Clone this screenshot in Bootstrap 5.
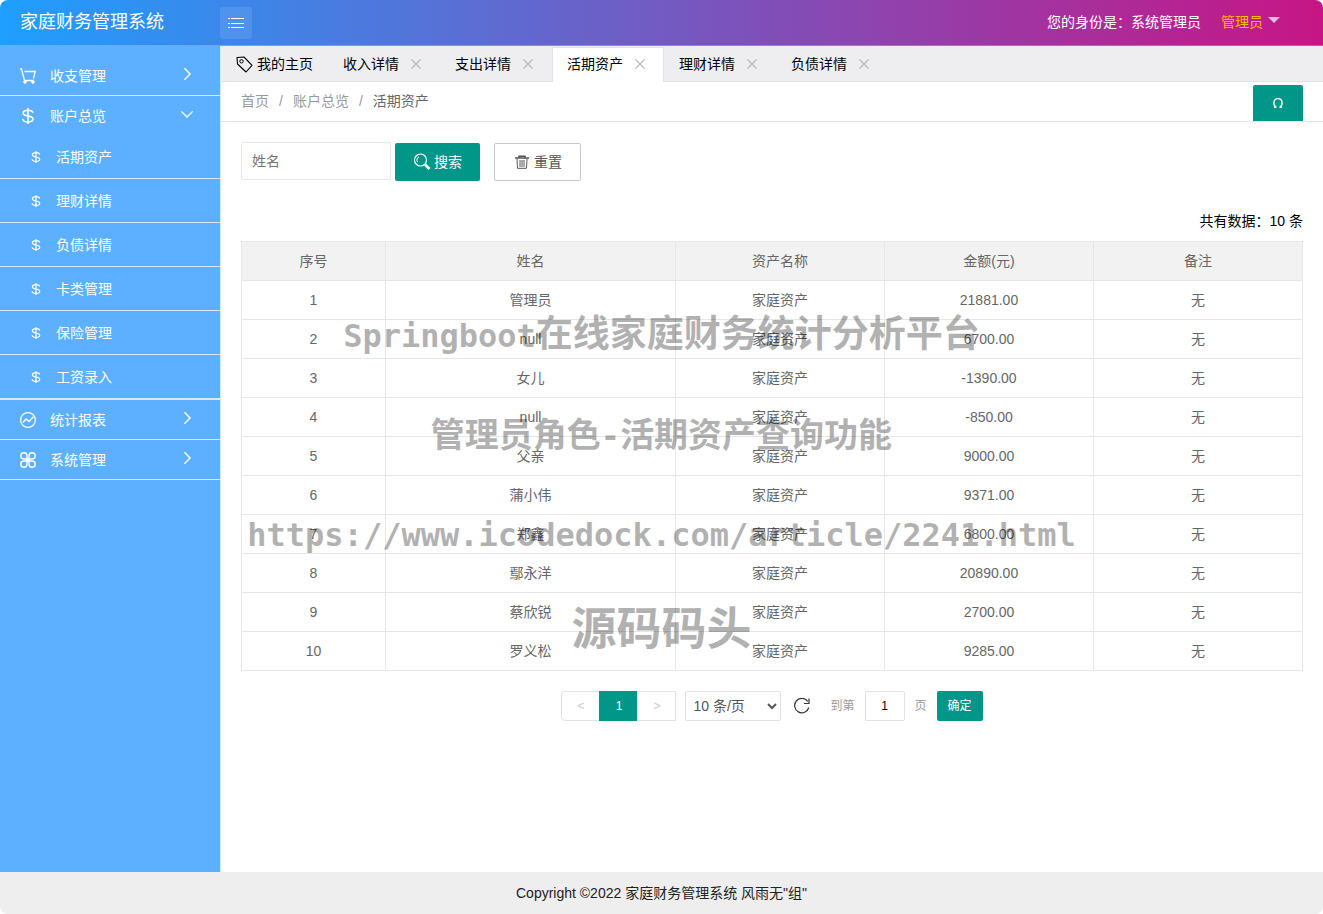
<!DOCTYPE html>
<html lang="zh-CN">
<head>
<meta charset="utf-8">
<meta name="viewport" content="width=device-width, initial-scale=1">
<title>家庭财务管理系统</title>
<link href="https://cdn.jsdelivr.net/npm/bootstrap@5.3.0/dist/css/bootstrap.min.css" rel="stylesheet">
<style>
  :root { --teal: #009688; --line: #e6e6e6; --side: #5dafff; }
  body { font-family: "Liberation Sans", "Noto Sans CJK SC", sans-serif; font-size: 14px; line-height: 24px; color: #000; background: #fff; }
  a { text-decoration: none; color: inherit; }
  svg { display: block; flex: none; fill: none; stroke: currentColor; }
  button, input, select { font-family: inherit; }
  .shell { border-radius: 8px; overflow: hidden; }
  .topbar { height: 46px; background: linear-gradient(to right, #1e9fff, #c71585); border-bottom: 1px solid rgba(255,255,255,.25); color: #fff; }
  .brand-name { width: 220px; padding-left: 20px; font-size: 18px; line-height: 44px; }
  .menu-toggle { width: 32px; height: 32px; border: 0; border-radius: 3px; background: rgba(255,255,255,.1); color: #fff; }
  .who { line-height: 44px; margin-right: 20px; }
  .account { color: #ffb800; margin-right: 43px; }
  .triangle { border: 6px solid transparent; border-top-color: rgba(255,255,255,.7); border-bottom: 0; margin: 0 0 4px 5px; }

  .sidebar { width: 221px; padding-top: 10px; background: var(--side); color: #fff; border-right: 1px solid #d4e8fc; }
  .side-item { border-bottom: 1px solid #d9e8f5; }
  .side-link { height: 39px; padding: 0 26px 0 20px; }
  .side-link .label { margin-left: 14px; }
  .side-icon { width: 16px; }
  .side-sub { height: 44px; padding-left: 28px; border-bottom: 1px solid #d9e8f5; }
  .side-sub .label { margin-left: 12px; }

  .tabs { height: 36px; background: #eeeef0; border-bottom: 1px solid #e2e2e2; }
  .tab-item { width: 112px; height: 36px; padding: 0 15px; }
  .tab-item.home { width: 107px; }
  .tab-item.current { margin-top: 1px; height: 35px; padding: 0 14px 2px; background: #fff; border: 1px solid #e2e2e2; border-bottom: 0; border-radius: 2px 2px 0 0; }
  .tab-close { border: 0; padding: 0; background: none; color: #b8b8b8; }
  .crumbs { height: 40px; padding: 0 20px; border-bottom: 1px solid #e5e5e5; color: #999; }
  .crumbs .breadcrumb { line-height: 22px; padding-bottom: 2px; }
  .crumbs .breadcrumb-item + .breadcrumb-item { padding-left: 10px; }
  .crumbs .breadcrumb-item + .breadcrumb-item::before { padding-right: 10px; color: #999; }
  .crumbs .breadcrumb-item.active { color: #666; }
  .reload { width: 50px; height: 36px; border-radius: 2px 2px 0 0; background: var(--teal); color: #fff; }

  .content { padding: 20px; }
  .name-box { width: 150px; height: 38px; padding: 0 10px; border: 1px solid var(--line); border-radius: 2px; font-size: 14px; }
  .name-box::placeholder { color: #757575; }
  .act { height: 38px; margin-top: 1px; padding: 0 18px; border: 0; border-radius: 2px; font-size: 14px; }
  .act-search { background: var(--teal); color: #fff; margin-left: 4px; width: 85px; }
  .act-reset { background: #fff; color: #555; border: 1px solid #c9c9c9; margin-left: 14px; width: 87px; }
  .total { margin: 28px 0 8px; }
  .data { table-layout: fixed; color: #666; margin: 0 0 20px; border-color: var(--line); text-align: center; }
  .data th, .data td { padding: 7px 4px; border: 1px solid var(--line); font-weight: 400; color: #666; }
  .data th { background: #f2f2f2; }
  .c-no { width: 144px; } .c-name { width: 290px; }

  .pager { font-size: 12px; color: #999; }
  .pager .step { width: 39px; height: 30px; padding: 0; border: 1px solid #e2e2e2; background: #fff; color: #ccc; font-size: 12px; }
  .pager .step + .step { margin-left: -1px; }
  .pager .step.on { background: var(--teal); border-color: var(--teal); color: #fff; }
  .size-pick { width: 96px; height: 30px; padding: 0 3px; margin: 0 13px 0 9px; border: 1px solid #e2e2e2; border-radius: 2px; background: #fff; color: #555; font-size: 14px; }
  .again { border: 0; padding: 0; background: none; color: #333; margin-right: 20px; }
  .goto { width: 40px; height: 30px; margin: 0 10px; border: 1px solid #e2e2e2; border-radius: 2px; text-align: center; color: #000; }
  .go { width: 46px; height: 30px; padding: 0; margin-left: 10px; border: 0; border-radius: 2px; background: var(--teal); color: #fff; }
  .foot { height: 42px; background: #eee; color: #222; }

  .overlay { top: 285px; left: 0; right: 0; pointer-events: none; text-align: center; font-weight: 700; color: #000; opacity: .3; white-space: nowrap; }
  .overlay div { height: 100px; line-height: 100px; }
  .overlay .mono { font-family: "DejaVu Sans Mono", monospace; font-size: 32px; line-height: 1; }
  .wm-a { font-size: 37px; } .wm-b { font-size: 34px; } .wm-c { font-size: 45px; } .wm-d { font-size: 32px; }
  .overlay .wm-c { height: 90px; line-height: 90px; }
</style>
</head>
<body>
<svg width="0" height="0" class="position-absolute" aria-hidden="true">
  <symbol id="i-dollar" viewBox="0 0 16 16"><path d="M13 4.700C12.500 2.900 10.700 2.200 8 2.200S3.200 3.200 3.200 5s1.700 2.500 4.800 3 5 1.200 5 3.100-2 2.900-5 2.900-5-1-5.300-3M8 0v16" stroke-width="1.600"/></symbol>
  <symbol id="i-right" viewBox="0 0 16 16"><path d="M5 1.500l6.500 6.500L5 14.500" stroke-width="1.600"/></symbol>
  <symbol id="i-down" viewBox="0 0 16 16"><path d="M1.500 5L8 11.500 14.500 5" stroke-width="1.600"/></symbol>
  <symbol id="i-x" viewBox="0 0 10 10"><path d="M.5.5l9 9M9.500.5l-9 9" stroke-width="1.200"/></symbol>
</svg>
<div class="shell position-relative d-flex flex-column min-vh-100">
  <header class="topbar d-flex align-items-start">
    <div class="brand-name">家庭财务管理系统</div>
    <button class="menu-toggle d-flex align-items-center justify-content-center p-0 mt-auto mb-auto" aria-label="菜单">
      <svg width="18" height="12" viewBox="0 0 18 12"><path d="M1 1.500h2M4 1.500h13M1 6.500h2M4 6.500h13M1 10.500h2M4 10.500h13" stroke-width="1"/></svg>
    </button>
    <span class="who ms-auto">您的身份是：系统管理员</span>
    <a href="#" class="account who d-flex align-items-center">管理员<span class="triangle"></span></a>
  </header>

  <div class="d-flex flex-grow-1">
    <nav class="sidebar flex-shrink-0" aria-label="主菜单">
      <div class="side-item">
        <a href="#" class="side-link d-flex align-items-center">
          <svg class="side-icon" width="16" height="16" viewBox="0 0 16 16"><path d="M0 1h1.500l3 11.500h9.500M4.500 3.500H15.200L13.500 10.500" stroke-width="1.300"/><circle cx="5" cy="14" r="1.300" fill="currentColor"/><circle cx="13" cy="14" r="1.300" fill="currentColor"/></svg>
          <span class="label">收支管理</span><svg class="ms-auto mb-1" width="14" height="14"><use href="#i-right"/></svg></a>
      </div>
      <div class="side-item">
        <a href="#" class="side-link d-flex align-items-center" aria-expanded="true">
          <svg width="16" height="16"><use href="#i-dollar"/></svg>
          <span class="label">账户总览</span><svg class="ms-auto mb-1" width="14" height="14"><use href="#i-down"/></svg></a>
        <a href="#" class="side-sub d-flex align-items-center"><svg width="16" height="12"><use href="#i-dollar"/></svg><span class="label">活期资产</span></a>
        <a href="#" class="side-sub d-flex align-items-center"><svg width="16" height="12"><use href="#i-dollar"/></svg><span class="label">理财详情</span></a>
        <a href="#" class="side-sub d-flex align-items-center"><svg width="16" height="12"><use href="#i-dollar"/></svg><span class="label">负债详情</span></a>
        <a href="#" class="side-sub d-flex align-items-center"><svg width="16" height="12"><use href="#i-dollar"/></svg><span class="label">卡类管理</span></a>
        <a href="#" class="side-sub d-flex align-items-center"><svg width="16" height="12"><use href="#i-dollar"/></svg><span class="label">保险管理</span></a>
        <a href="#" class="side-sub d-flex align-items-center"><svg width="16" height="12"><use href="#i-dollar"/></svg><span class="label">工资录入</span></a>
      </div>
      <div class="side-item">
        <a href="#" class="side-link d-flex align-items-center">
          <svg class="side-icon" width="16" height="16" viewBox="0 0 16 16"><circle cx="8" cy="8" r="7.400" stroke-width="1.200"/><path d="M3 10.500l3-3.500 3 2.500 4.500-5" stroke-width="1.300"/></svg>
          <span class="label">统计报表</span><svg class="ms-auto mb-1" width="14" height="14"><use href="#i-right"/></svg></a>
      </div>
      <div class="side-item">
        <a href="#" class="side-link d-flex align-items-center">
          <svg class="side-icon" width="16" height="16" viewBox="0 0 16 16" stroke-width="1.400"><path d="M7 7H3.800A3.100 3.100 0 1 1 7 3.800zM9 7V3.800A3.100 3.100 0 1 1 12.200 7zM7 9v3.200A3.100 3.100 0 1 1 3.800 9zM9 9h3.200A3.100 3.100 0 1 1 9 12.200z"/><path d="M6 8h4M8 6v4" stroke-width="2"/></svg>
          <span class="label">系统管理</span><svg class="ms-auto mb-1" width="14" height="14"><use href="#i-right"/></svg></a>
      </div>
    </nav>

    <main class="flex-grow-1">
      <div class="tabs d-flex">
        <a href="#" class="tab-item home d-flex align-items-center">
          <svg width="17" height="17" viewBox="0 0 17 17" stroke="#333"><path d="M1 1.500L8 1l8 8.300-6 6.700L1.500 8z" stroke-width="1.100" stroke-linejoin="round"/><circle cx="5.500" cy="5.300" r="1.700"/></svg>
          <span class="ms-1">我的主页</span></a>
        <div class="tab-item d-flex align-items-center"><a href="#">收入详情</a><button class="tab-close ms-auto me-1" aria-label="关闭"><svg width="10" height="10"><use href="#i-x"/></svg></button></div>
        <div class="tab-item d-flex align-items-center"><a href="#">支出详情</a><button class="tab-close ms-auto me-1" aria-label="关闭"><svg width="10" height="10"><use href="#i-x"/></svg></button></div>
        <div class="tab-item current d-flex align-items-center"><a href="#">活期资产</a><button class="tab-close ms-auto me-1" aria-label="关闭"><svg width="10" height="10"><use href="#i-x"/></svg></button></div>
        <div class="tab-item d-flex align-items-center"><a href="#">理财详情</a><button class="tab-close ms-auto me-1" aria-label="关闭"><svg width="10" height="10"><use href="#i-x"/></svg></button></div>
        <div class="tab-item d-flex align-items-center"><a href="#">负债详情</a><button class="tab-close ms-auto me-1" aria-label="关闭"><svg width="10" height="10"><use href="#i-x"/></svg></button></div>
      </div>
      <div class="crumbs d-flex align-items-center">
        <ol class="breadcrumb mb-0">
          <li class="breadcrumb-item"><a href="#">首页</a></li>
          <li class="breadcrumb-item"><a href="#">账户总览</a></li>
          <li class="breadcrumb-item active">活期资产</li>
        </ol>
        <a href="#" class="reload ms-auto mt-auto d-flex align-items-center justify-content-center" aria-label="刷新">
          <svg width="12" height="12" viewBox="0 0 12 12"><path d="M2 10.300h2.400C.8 8.500.900 1.700 6 1.700S11.200 8.500 7.600 10.300H10" stroke-width="1.300"/></svg></a>
      </div>

      <div class="content">
        <form class="d-flex">
          <input class="name-box" type="text" placeholder="姓名" aria-label="姓名">
          <button type="button" class="act act-search d-flex align-items-center">
            <svg width="18" height="18" viewBox="0 0 18 18"><circle cx="7.500" cy="7" r="6" stroke-width="1.200"/><path d="M4.500 9A3.500 3.500 0 0 1 6 3.800" stroke-width="1"/><path d="M12 11.500l4.500 4.500" stroke-width="2.600"/></svg>
            <span class="ms-auto">搜索</span></button>
          <button type="reset" class="act act-reset d-flex align-items-center">
            <svg width="18" height="14" viewBox="0 0 18 14" stroke="#888"><path d="M2 3h14M6 2.500V1.200h6v1.300" stroke-width="1.500"/><path d="M4 4l.5 9.300h9L14 4M7 5v7M9 5v7M11 5v7"/></svg>
            <span class="ms-auto">重置</span></button>
        </form>
        <div class="total text-end">共有数据：10 条</div>
        <table class="table data">
          <colgroup><col class="c-no"><col class="c-name"><col><col><col></colgroup>
          <thead><tr><th>序号</th><th>姓名</th><th>资产名称</th><th>金额(元)</th><th>备注</th></tr></thead>
          <tbody>
            <tr><td>1</td><td>管理员</td><td>家庭资产</td><td>21881.00</td><td>无</td></tr>
            <tr><td>2</td><td>null</td><td>家庭资产</td><td>6700.00</td><td>无</td></tr>
            <tr><td>3</td><td>女儿</td><td>家庭资产</td><td>-1390.00</td><td>无</td></tr>
            <tr><td>4</td><td>null</td><td>家庭资产</td><td>-850.00</td><td>无</td></tr>
            <tr><td>5</td><td>父亲</td><td>家庭资产</td><td>9000.00</td><td>无</td></tr>
            <tr><td>6</td><td>蒲小伟</td><td>家庭资产</td><td>9371.00</td><td>无</td></tr>
            <tr><td>7</td><td>郑鑫</td><td>家庭资产</td><td>6800.00</td><td>无</td></tr>
            <tr><td>8</td><td>鄢永洋</td><td>家庭资产</td><td>20890.00</td><td>无</td></tr>
            <tr><td>9</td><td>蔡欣锐</td><td>家庭资产</td><td>2700.00</td><td>无</td></tr>
            <tr><td>10</td><td>罗义松</td><td>家庭资产</td><td>9285.00</td><td>无</td></tr>
          </tbody>
        </table>
        <div class="pager d-flex align-items-center justify-content-center">
          <button class="step rounded-start-1">&lt;</button><button class="step on">1</button><button class="step">&gt;</button>
          <select class="size-pick" aria-label="每页条数"><option>10 条/页</option><option>20 条/页</option></select>
          <button class="again" aria-label="刷新"><svg width="16" height="16" viewBox="0 0 16 16"><path d="M14.800 9.500A7.200 7.200 0 1 1 13.800 3.500" stroke-width="1.200"/><path d="M15 .5v5h-5" stroke-width="1.200"/></svg></button>
          <label for="page-no">到第</label><input id="page-no" class="goto" type="text" value="1"><span>页</span>
          <button class="go">确定</button>
        </div>
      </div>
    </main>
  </div>
  <footer class="foot d-flex align-items-center justify-content-center">Copyright ©2022 家庭财务管理系统 风雨无"组"</footer>

  <div class="overlay position-absolute">
    <div class="wm-a"><span class="mono">Springboot</span>在线家庭财务统计分析平台</div>
    <div class="wm-b">管理员角色<span class="mono">-</span>活期资产查询功能</div>
    <div class="wm-d"><span class="mono">https://www.icodedock.com/article/2241.html</span></div>
    <div class="wm-c">源码码头</div>
  </div>
</div>
<script src="https://cdn.jsdelivr.net/npm/bootstrap@5.3.0/dist/js/bootstrap.bundle.min.js"></script>
</body>
</html>
